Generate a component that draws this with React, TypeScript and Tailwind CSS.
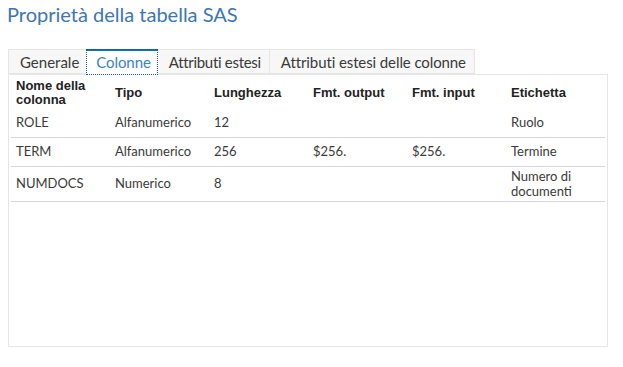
import React from "react";

const rows = [
  { name: "ROLE", tipo: "Alfanumerico", len: "12", out: "", inp: "", label: ["Ruolo"], h: "h-[28px]" },
  { name: "TERM", tipo: "Alfanumerico", len: "256", out: "$256.", inp: "$256.", label: ["Termine"], h: "h-[29px]" },
  { name: "NUMDOCS", tipo: "Numerico", len: "8", out: "", inp: "", label: ["Numero di", "documenti"], h: "h-[35px]" },
];

export default function App() {
  return (
    <div className="w-[623px] h-[367px] bg-white font-['Lato',sans-serif] overflow-hidden">
      <div className="pl-[7px] pt-[1px] h-[49px] text-[20px] leading-[26px] text-[#3b76b6]">
        Proprietà della tabella SAS
      </div>
      <div className="pl-[8px] flex">
        <div className="flex h-[25px] text-[15px] text-[#3a3a3a] leading-[22px]">
          <div className="pl-[11px] pr-[7px] bg-[#f7f7f7] border border-[#e6e6e6] border-r-0 pt-[1px]">Generale</div>
          <div className="relative pl-[10px] pr-[7px] bg-white border-t-2 border-[#0b72c9] text-[#3b82cc] outline-1 outline-dotted outline-[#1d4f91] -outline-offset-1 z-10 h-[26px] tracking-[-0.1px]">
            Colonne
          </div>
          <div className="pl-[11px] pr-[8px] bg-[#f7f7f7] border border-[#e6e6e6] border-l-0 pt-[1px] tracking-[-0.3px]">Attributi estesi</div>
          <div className="pl-[11px] pr-[8px] bg-[#f7f7f7] border border-[#e6e6e6] border-l-0 pt-[1px] tracking-[-0.1px]">Attributi estesi delle colonne</div>
        </div>
      </div>
      <div className="ml-[8px] w-[600px] h-[273px] border border-[#e6e6e6] pt-[1px] px-[2px]">
        <table className="w-[594px] border-collapse table-fixed">
          <thead>
            <tr className="h-[33px] text-[13px] leading-[14px] font-['Liberation_Sans',sans-serif] font-bold text-[#222]">
              <th className="text-left align-middle pl-[5px] w-[99px]">Nome della<br />colonna</th>
              <th className="text-left align-middle pl-[5px] w-[99px]">Tipo</th>
              <th className="text-left align-middle pl-[5px] w-[99px]">Lunghezza</th>
              <th className="text-left align-middle pl-[5px] w-[99px]">Fmt. output</th>
              <th className="text-left align-middle pl-[5px] w-[99px]">Fmt. input</th>
              <th className="text-left align-middle pl-[5px]">Etichetta</th>
            </tr>
          </thead>
          <tbody className="text-[13px] leading-[15px] text-[#3a3a3a]">
            {rows.map((r) => (
              <tr key={r.name} className={`${r.h} border-b border-[#d3d6db]`}>
                <td className="pl-[5px] align-middle">{r.name}</td>
                <td className="pl-[5px] align-middle">{r.tipo}</td>
                <td className="pl-[5px] align-middle">{r.len}</td>
                <td className="pl-[5px] align-middle">{r.out}</td>
                <td className="pl-[5px] align-middle">{r.inp}</td>
                <td className="pl-[5px] align-middle">
                  {r.label.map((l, i) => (
                    <div key={i}>{l}</div>
                  ))}
                </td>
              </tr>
            ))}
          </tbody>
        </table>
      </div>
    </div>
  );
}
